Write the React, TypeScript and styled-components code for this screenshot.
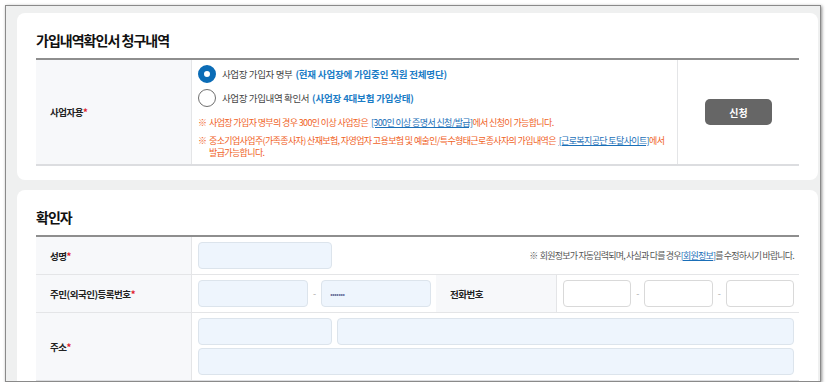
import styled, { createGlobalStyle } from 'styled-components';

const GlobalStyle = createGlobalStyle`
  body {
    margin: 0;
    background: #ffffff;
    font-family: 'Noto Sans CJK KR', 'Noto Sans', sans-serif;
    color: #222;
  }
`;

const Frame = styled.div`
  box-sizing: border-box;
  width: 816px;
  height: 377px;
  margin: 5px 0 0 5px;
  padding: 7px 0 0 11px;
  background-color: #eff0f0;
  border: 1px solid #8a8a8a;
  box-shadow: 1px 1px 3px rgba(0, 0, 0, 0.45);
  overflow: hidden;
  display: flex;
  flex-direction: column;
  gap: 10px;
`;

const Card = styled.section`
  box-sizing: border-box;
  width: 801px;
  flex-shrink: 0;
  padding: 17px 19px 14px;
  background-color: #ffffff;
  border-radius: 8px;
`;

const SectionTitle = styled.h2`
  margin: 0 0 8px;
  font-size: 14px;
  line-height: 20px;
  font-weight: 700;
  letter-spacing: -0.07em;
  color: #111;
`;

const Table = styled.div`
  border-top: 2px solid #8e8e8e;
  border-bottom: 2px solid #dcdde0;
`;

const Row = styled.div<{ $height: number }>`
  display: flex;
  min-height: ${(p) => p.$height}px;
  & + & {
    border-top: 1px solid #e4e5e7;
  }
`;

const LabelCell = styled.div<{ $width: number }>`
  box-sizing: border-box;
  width: ${(p) => p.$width}px;
  flex-shrink: 0;
  padding-left: 14px;
  display: flex;
  align-items: center;
  background-color: #f7f8fa;
  border-right: 1px solid #e4e5e7;
  font-size: 9.5px;
  font-weight: 700;
  letter-spacing: -0.05em;
  color: #222;
`;

const Required = styled.span`
  color: #e0202b;
`;

const Cell = styled.div<{ $width?: number }>`
  box-sizing: border-box;
  ${(p) => (p.$width ? `width: ${p.$width}px; flex-shrink: 0;` : 'flex: 1; min-width: 0;')}
  padding: 5px 5px 5px 6px;
  display: flex;
  align-items: center;
  gap: 5px;
`;

const StackCell = styled.div`
  box-sizing: border-box;
  flex: 1;
  min-width: 0;
  padding: 5px 5px 5px 6px;
  display: flex;
  flex-direction: column;
`;

const ActionCell = styled.div`
  width: 121px;
  flex-shrink: 0;
  display: flex;
  align-items: center;
  justify-content: center;
  border-left: 1px solid #e4e5e7;
`;

const Option = styled.label`
  display: flex;
  align-items: center;
  height: 18px;
  font-size: 9.5px;
  letter-spacing: -0.04em;
  color: #444;
  & + & {
    margin-top: 6px;
  }
`;

const Radio = styled.span<{ $checked?: boolean }>`
  box-sizing: border-box;
  width: 18px;
  height: 18px;
  margin-right: 6px;
  border-radius: 50%;
  background-color: #ffffff;
  border: ${(p) => (p.$checked ? '6px solid #0b6cb6' : '1.5px solid #6f6f6f')};
`;

const OptionDesc = styled.span`
  margin-left: 3px;
  color: #1a7cc6;
  font-weight: 700;
  letter-spacing: -0.02em;
`;

const Notes = styled.div`
  margin-top: 10px;
  display: flex;
  flex-direction: column;
  gap: 6px;
`;

const Note = styled.p<{ $tone?: 'warn' | 'info' }>`
  margin: 0;
  display: flex;
  font-size: 9px;
  line-height: 12px;
  letter-spacing: -0.07em;
  color: ${(p) => (p.$tone === 'info' ? '#555' : '#f0621e')};
`;

const Mark = styled.span`
  width: 11px;
  flex-shrink: 0;
`;

const Link = styled.a`
  color: #1a6fb8;
  text-decoration: underline;
`;

const InfoNote = styled(Note)`
  margin-left: auto;
  white-space: nowrap;
  letter-spacing: -0.09em;
`;

const ApplyButton = styled.button`
  width: 67px;
  height: 26px;
  border: 0;
  border-radius: 5px;
  background-color: #666666;
  color: #ffffff;
  font-family: inherit;
  font-size: 10px;
  font-weight: 700;
  cursor: pointer;
`;

const Field = styled.input<{ $tone?: 'filled' | 'plain'; $width?: number }>`
  box-sizing: border-box;
  height: 27px;
  ${(p) => (p.$width ? `width: ${p.$width}px; flex-shrink: 0;` : 'flex: 1 1 0; width: 0; min-width: 0;')}
  padding: 0 8px;
  border: 1px solid ${(p) => (p.$tone === 'plain' ? '#d9d9d9' : '#dce4ec')};
  border-radius: 4px;
  background-color: ${(p) => (p.$tone === 'plain' ? '#ffffff' : '#eef5fd')};
  font-family: inherit;
  font-size: 7px;
  letter-spacing: -0.3px;
  color: #6a6a9a;
  outline: none;
`;

const Dash = styled.span`
  font-size: 9px;
  color: #aaa;
`;

const FieldLine = styled.div`
  display: flex;
  gap: 5px;
  & + & {
    margin-top: 3px;
  }
`;

export default function App() {
  return (
    <>
      <GlobalStyle />
      <Frame>
        <Card>
          <SectionTitle>가입내역확인서 청구내역</SectionTitle>
          <Table>
            <Row $height={104}>
              <LabelCell $width={156}>
                사업자용<Required>*</Required>
              </LabelCell>
              <StackCell>
                <Option>
                  <Radio $checked />
                  사업장 가입자 명부
                  <OptionDesc>(현재 사업장에 가입중인 직원 전체명단)</OptionDesc>
                </Option>
                <Option>
                  <Radio />
                  사업장 가입내역 확인서
                  <OptionDesc>(사업장 4대보험 가입상태)</OptionDesc>
                </Option>
                <Notes>
                  <Note>
                    <Mark>※</Mark>
                    <span>
                      사업장 가입자 명부의 경우 300인 이상 사업장은&nbsp;{' '}
                      <Link>[300인 이상 증명서 신청/발급]</Link>에서 신청이 가능합니다.
                    </span>
                  </Note>
                  <Note>
                    <Mark>※</Mark>
                    <span>
                      중소기업사업주(가족종사자) 산재보험, 자영업자 고용보험 및 예술인/특수형태근로종사자의 가입내역은&nbsp;{' '}
                      <Link>[근로복지공단 토탈사이트]</Link>에서
                      <br />
                      발급가능합니다.
                    </span>
                  </Note>
                </Notes>
              </StackCell>
              <ActionCell>
                <ApplyButton type="button">신청</ApplyButton>
              </ActionCell>
            </Row>
          </Table>
        </Card>

        <Card>
          <SectionTitle>확인자</SectionTitle>
          <Table>
            <Row $height={37}>
              <LabelCell $width={156}>
                성명<Required>*</Required>
              </LabelCell>
              <Cell>
                <Field $width={134} readOnly />
                <InfoNote $tone="info">
                  ※&nbsp; 회원정보가 자동입력되며, 사실과 다를 경우<Link>[회원정보]</Link>를 수정하시기 바랍니다.
                </InfoNote>
              </Cell>
            </Row>
            <Row $height={36}>
              <LabelCell $width={156}>
                주민(외국인)등록번호<Required>*</Required>
              </LabelCell>
              <Cell $width={244}>
                <Field $width={110} readOnly />
                <Dash>-</Dash>
                <Field readOnly value="•••••••" />
              </Cell>
              <LabelCell $width={121}>전화번호</LabelCell>
              <Cell>
                <Field $tone="plain" readOnly />
                <Dash>-</Dash>
                <Field $tone="plain" readOnly />
                <Dash>-</Dash>
                <Field $tone="plain" readOnly />
              </Cell>
            </Row>
            <Row $height={67}>
              <LabelCell $width={156}>
                주소<Required>*</Required>
              </LabelCell>
              <StackCell>
                <FieldLine>
                  <Field $width={134} readOnly />
                  <Field readOnly />
                </FieldLine>
                <FieldLine>
                  <Field readOnly />
                </FieldLine>
              </StackCell>
            </Row>
          </Table>
        </Card>
      </Frame>
    </>
  );
}
